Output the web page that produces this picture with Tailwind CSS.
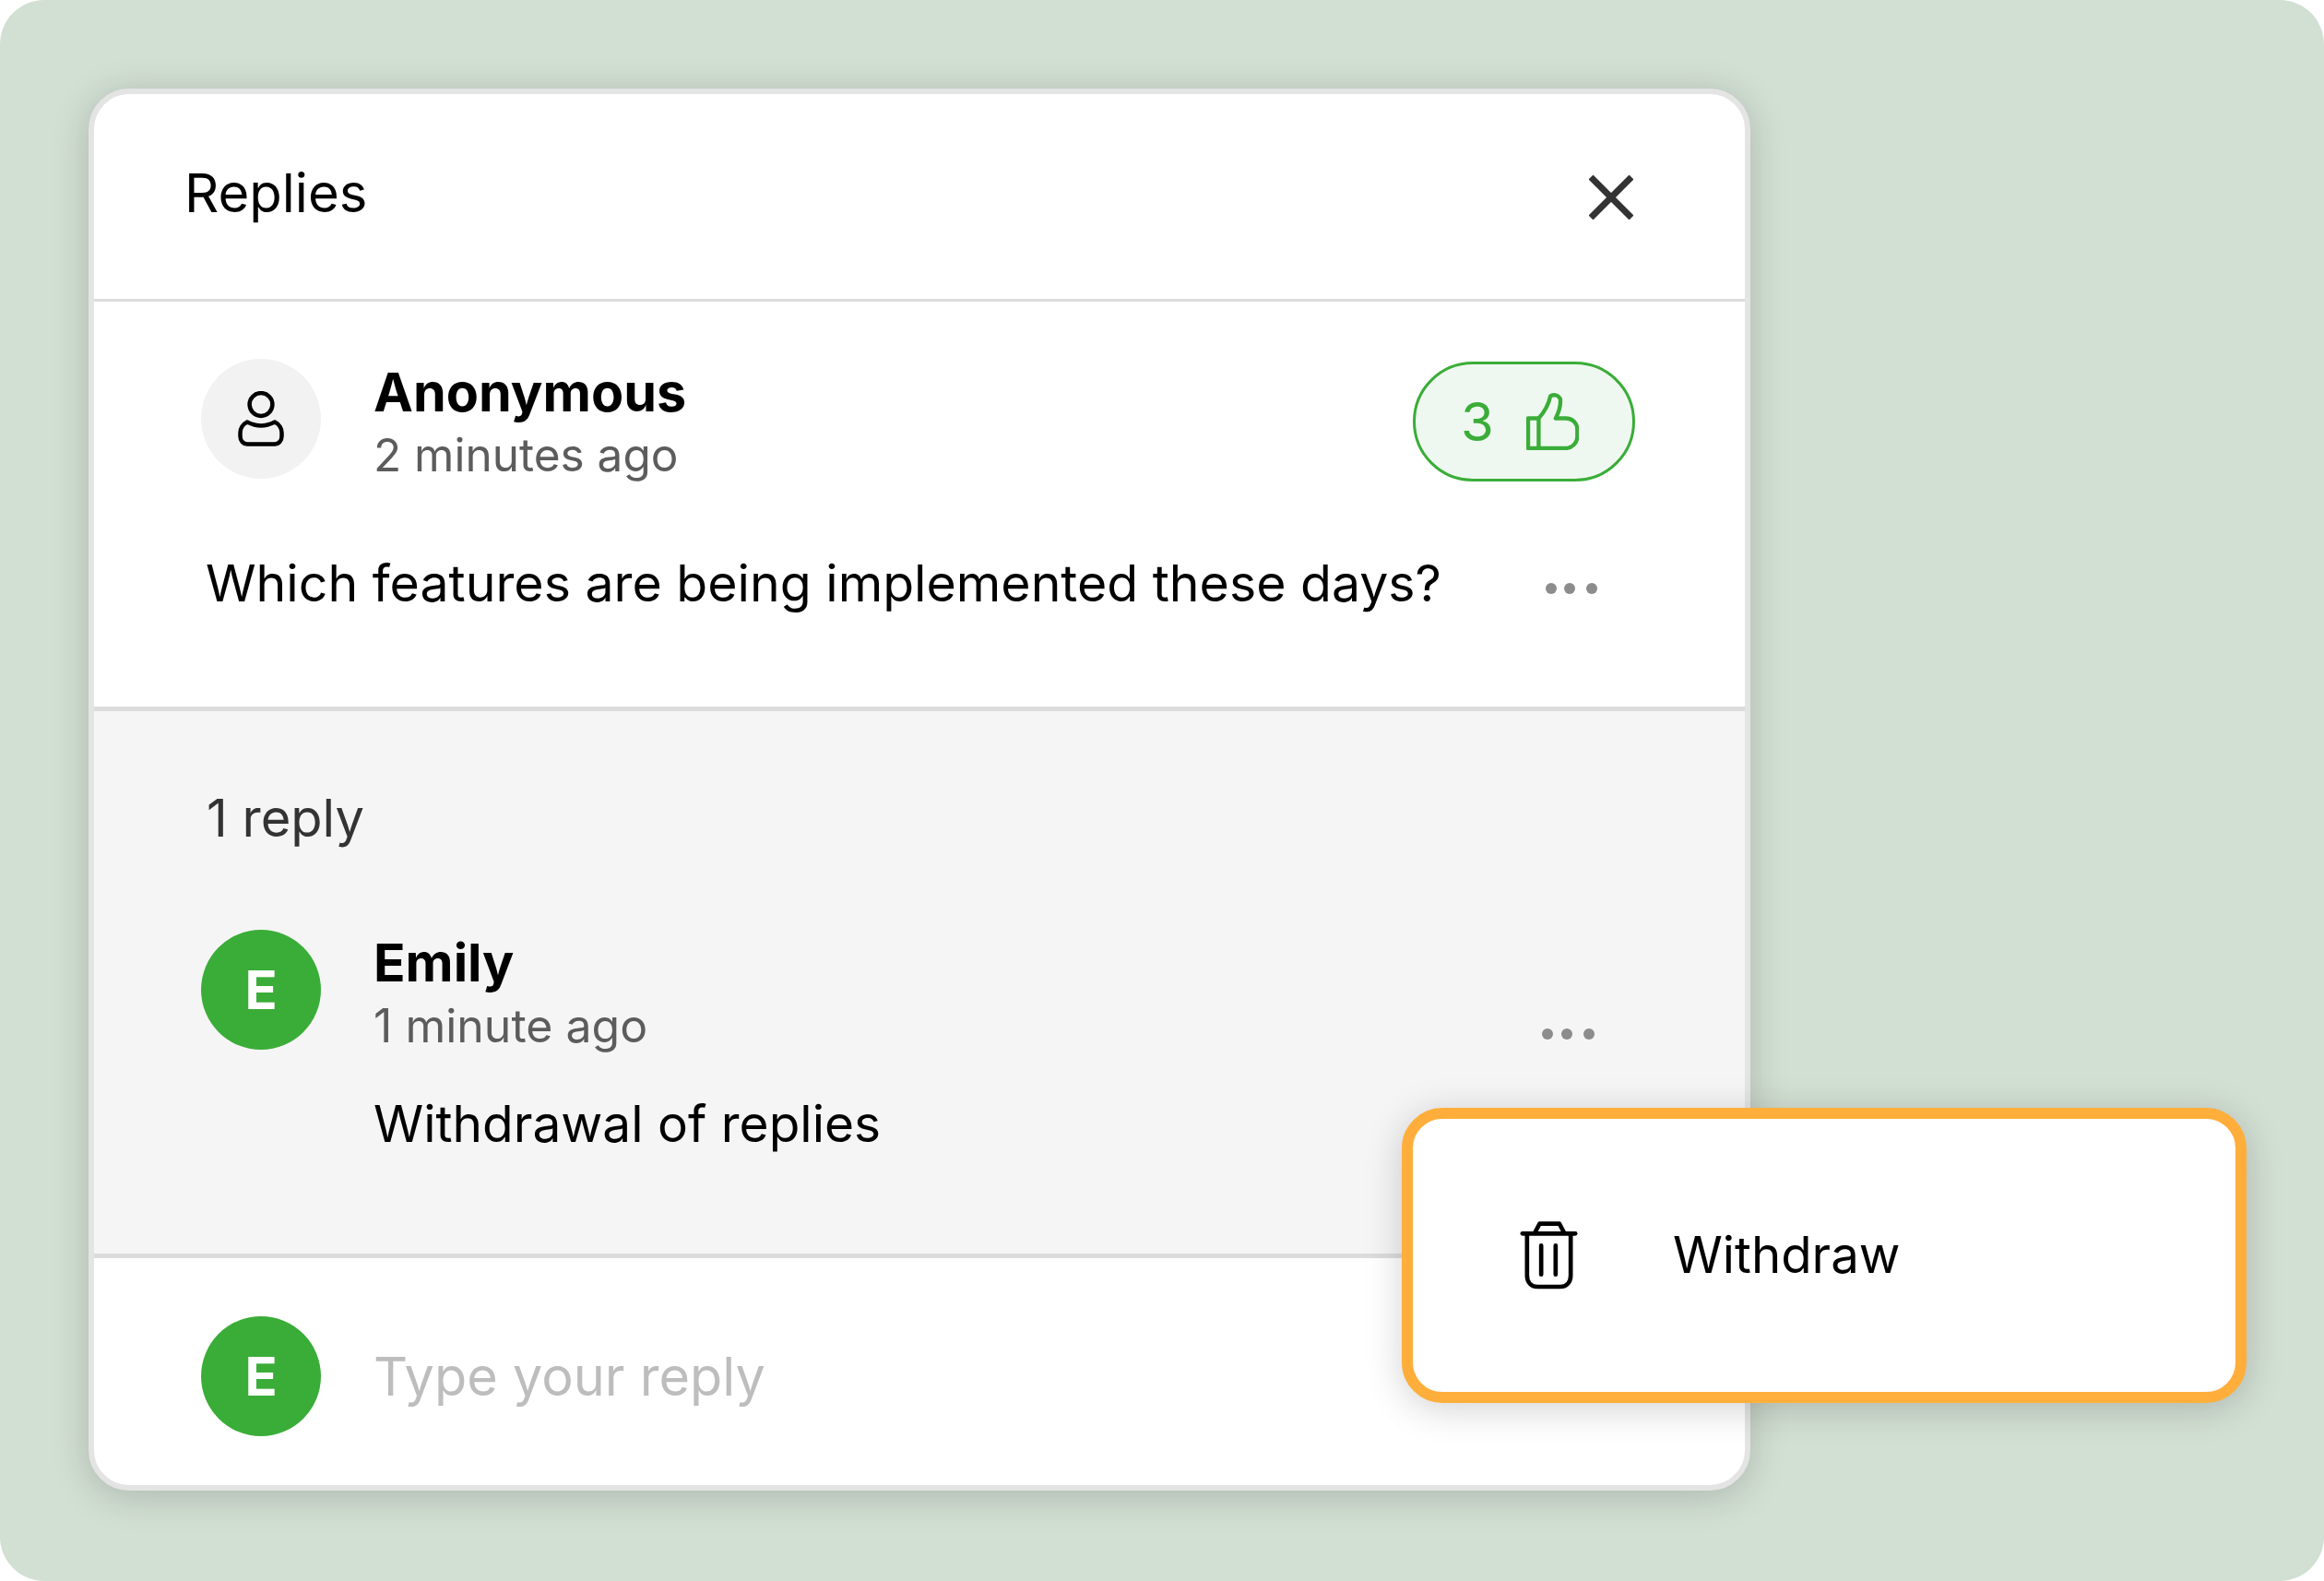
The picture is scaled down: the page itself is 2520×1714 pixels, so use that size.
<!DOCTYPE html>
<html lang="en">
<head>
	<meta charset="UTF-8">
	<title>Replies</title>
	<script src="https://cdn.jsdelivr.net/npm/@tailwindcss/browser@4"></script>
</head>
<body class="bg-white font-[Inter,sans-serif] text-black">
	<div class="relative w-[2520px] h-[1714px] rounded-[48px] bg-[#d2dfd3] pt-[96px] pl-[96px] overflow-hidden">

		<!-- card -->
		<div class="flex flex-col w-[1802px] h-[1520px] rounded-[44px] border-[6px] border-[#e4e4e4] bg-white overflow-hidden shadow-[0_6px_40px_rgba(0,0,0,0.18)]">
			<header class="flex justify-between h-[225px] shrink-0 border-b-[3px] border-[#dcdcdc] pl-[98px] pr-[121px]">
				<h1 class="mt-[73px] text-[58px] leading-[68px] font-normal">Replies</h1>
				<svg class="mt-[88px]" width="48" height="48" viewBox="0 0 48 48" fill="none" stroke="#333333" stroke-width="7">
					<path d="M2 2 L46 46 M46 2 L2 46"/>
				</svg>
			</header>

			<section class="h-[444px] shrink-0 border-b-[5px] border-[#dcdcdc] pl-[116px] pr-[119px] pt-[62px]">
				<div class="flex items-start">
					<div class="flex items-center justify-center shrink-0 w-[130px] h-[130px] rounded-full bg-[#f2f2f2]">
						<svg width="60" height="60" viewBox="0 0 60 60" fill="none" stroke="#000" stroke-width="4.5" stroke-linejoin="round">
							<circle cx="30" cy="14.5" r="12.4"/>
							<path d="M15 33.5 C20 36 25 37.5 30 37.5 C35 37.5 40 36 45 33.5 C50 36 52.5 41 52.5 45 V49 C52.5 54 49 57.5 45 57.5 H15 C11 57.5 7.5 54 7.5 49 V45 C7.5 41 10 36 15 33.5 Z"/>
						</svg>
					</div>
					<div class="ml-[57px] flex-1">
						<div class="text-[57.5px] leading-[68px] font-bold mt-[2px]">Anonymous</div>
						<div class="text-[49.5px] leading-[58px] mt-[5px] text-[#5c5c5c]">2 minutes ago</div>
					</div>
					<div class="flex items-center shrink-0 w-[241px] h-[130px] mt-[3px] rounded-full border-[3px] border-[#3aad38] bg-[#eff8f0] pl-[49px] text-[#3aad38]">
						<span class="text-[58px] leading-[68px]">3</span>
						<svg class="ml-[35px]" width="57" height="62" viewBox="430 140 170 185" fill="none" stroke="#3aad38" stroke-width="13" stroke-linejoin="round">
							<path d="M436 222 H470 V319 H436 Z"/>
							<path d="M470 222 C490 200 502 178 508 150 C520 144 534 146 540 160 C542 180 534 205 525 222 H557 C580 222 595 238 595 258 V280 C595 302 578 319 555 319 H470"/>
						</svg>
					</div>
				</div>
				<div class="flex items-center mt-[76px] ml-[5px]">
					<p class="w-[1453px] text-[55.4px] leading-[68px]">Which features are being implemented these days?</p>
					<div class="flex mt-[12px]">
						<span class="w-[12px] h-[12px] rounded-full bg-[#8c8c8c]"></span>
						<span class="w-[12px] h-[12px] rounded-full bg-[#8c8c8c] ml-[8px]"></span>
						<span class="w-[12px] h-[12px] rounded-full bg-[#8c8c8c] ml-[12px]"></span>
					</div>
				</div>
			</section>

			<section class="h-[593px] shrink-0 border-b-[5px] border-[#dcdcdc] bg-[#f5f5f5] pl-[116px] pr-[163px] pt-[82px]">
				<div class="ml-[6px] text-[56px] leading-[68px] text-[#333333]">1 reply</div>
				<div class="flex mt-[87px]">
					<div class="flex items-center justify-center shrink-0 w-[130px] h-[130px] rounded-full bg-[#3aad38] text-white text-[58px] font-bold">E</div>
					<div class="ml-[57px] flex-1">
						<div class="text-[57px] leading-[68px] font-bold mt-[2px]">Emily</div>
						<div class="text-[50px] leading-[58px] mt-[5px] text-[#5c5c5c]">1 minute ago</div>
						<p class="mt-[43px] text-[55px] leading-[68px]">Withdrawal of replies</p>
					</div>
					<div class="flex self-start mt-[107px]">
						<span class="w-[12px] h-[12px] rounded-full bg-[#8c8c8c]"></span>
						<span class="w-[12px] h-[12px] rounded-full bg-[#8c8c8c] ml-[9px]"></span>
						<span class="w-[12px] h-[12px] rounded-full bg-[#8c8c8c] ml-[12px]"></span>
					</div>
				</div>
			</section>

			<section class="flex items-start flex-1 pl-[116px] pt-[63px]">
				<div class="flex items-center justify-center shrink-0 w-[130px] h-[130px] rounded-full bg-[#3aad38] text-white text-[58px] font-bold">E</div>
				<span class="ml-[57px] mt-[31px] text-[57.6px] leading-[68px] text-[#bdbdbd]">Type your reply</span>
			</section>
		</div>

		<!-- popover menu -->
		<div class="absolute left-[1520px] top-[1201px] flex items-center w-[916px] h-[320px] rounded-[44px] border-[12px] border-[#ffae3b] bg-white pl-[116px] shadow-[0_6px_40px_rgba(0,0,0,0.18)]">
			<svg width="63" height="74" viewBox="84 72 188 222" fill="none" stroke="#000" stroke-width="14" stroke-linecap="round" stroke-linejoin="round">
				<path d="M92 112 H264"/>
				<path d="M133 108 L148 80 H212 L227 108"/>
				<path d="M107 112 V248 C107 272 122 285 142 285 H214 C234 285 249 272 249 248 V112"/>
				<path d="M153 151 V245 M200 151 V245"/>
			</svg>
			<span class="ml-[103px] mb-[2px] text-[54.6px] leading-[68px]">Withdraw</span>
		</div>
	</div>
</body>
</html>
